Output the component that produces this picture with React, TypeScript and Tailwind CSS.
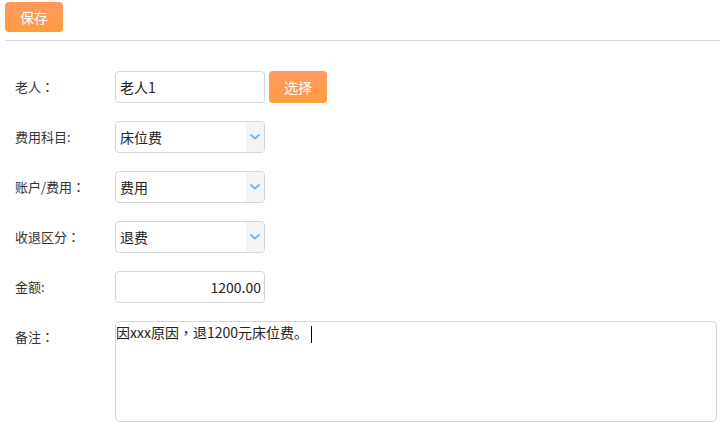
import React from "react";

const font = { fontFamily: '"Microsoft YaHei", "Noto Sans CJK SC", "Noto Sans", sans-serif' };
const tc = { fontFamily: '"Noto Sans CJK TC", sans-serif' };

function Chevron() {
  return (
    <svg width="10" height="6" viewBox="0 0 10 6" fill="none">
      <path d="M1 1 L5 4.5 L9 1" stroke="#6fb5ec" strokeWidth="1.8" strokeLinecap="round" strokeLinejoin="round" />
    </svg>
  );
}

function SelectBox({ value }: { value: string }) {
  return (
    <div className="flex h-[32px] w-[150px] items-center overflow-hidden rounded-[4px] border border-[#d6d6d6] bg-white">
      <div className="flex-1 pl-[4px] text-[14px] text-[#222]">{value}</div>
      <div className="flex h-full w-[18px] items-center justify-center bg-[#f4f4f4]">
        <Chevron />
      </div>
    </div>
  );
}

function Row({ label, colon, children, top }: { label: string; colon: "full" | "half"; children: React.ReactNode; top?: boolean }) {
  return (
    <div className={`flex ${top ? "items-start" : "items-center"}`}>
      <div className={`w-[100px] shrink-0 text-[13px] text-[#333] ${top ? "leading-[32px]" : ""}`}>
        {label}
        {colon === "full" ? <span style={tc}>：</span> : ":"}
      </div>
      {children}
    </div>
  );
}

export default function App() {
  return (
    <div className="h-[427px] w-[720px] overflow-hidden bg-white" style={font}>
      <div className="pl-[5px] pt-[2px]">
        <button className="flex h-[30px] w-[58px] items-center justify-center rounded-[4px] bg-gradient-to-b from-[#ff9960] to-[#ff9d3d] text-[14px] text-white">
          保存
        </button>
      </div>
      <div className="ml-[5px] mt-[8px] h-px bg-[#d9d9d9]" />
      <div className="flex flex-col gap-[18px] pl-[15px] pt-[30px]">
        <Row label="老人" colon="full">
          <div className="flex h-[32px] w-[150px] items-center rounded-[4px] border border-[#d6d6d6] bg-white pl-[4px] text-[14px] text-[#222]">
            老人1
          </div>
          <button className="ml-[4px] flex h-[32px] w-[58px] items-center justify-center rounded-[4px] bg-gradient-to-b from-[#ff9960] to-[#ff9d3d] text-[14px] text-white">
            选择
          </button>
        </Row>
        <Row label="费用科目" colon="half">
          <SelectBox value="床位费" />
        </Row>
        <Row label="账户/费用" colon="full">
          <SelectBox value="费用" />
        </Row>
        <Row label="收退区分" colon="full">
          <SelectBox value="退费" />
        </Row>
        <Row label="金额" colon="half">
          <div className="flex h-[32px] w-[150px] items-center justify-end rounded-[4px] border border-[#d6d6d6] bg-white pr-[3px] text-[14px] text-[#222]">
            1200.00
          </div>
        </Row>
        <Row label="备注" colon="full" top>
          <div className="h-[101px] w-[602px] rounded-[5px] border border-[#d6d6d6] bg-white pt-[1px] text-[14px] leading-[18px] text-[#222]">
            <span>因xxx原因</span>
            <span style={tc}>，</span>
            <span>退1200元床位费。</span>
            <span className="ml-[3px] inline-block h-[17px] w-px bg-black align-middle" />
          </div>
        </Row>
      </div>
    </div>
  );
}
